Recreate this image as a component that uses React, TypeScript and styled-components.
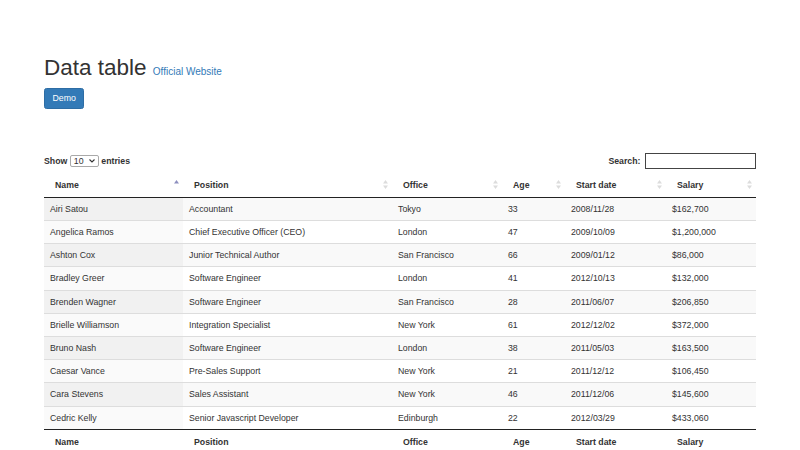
import React from 'react';
import styled, { createGlobalStyle } from 'styled-components';

const GlobalStyle = createGlobalStyle`
  *, *::before, *::after {
    box-sizing: border-box;
  }
  body {
    margin: 0;
    background: #fff;
    color: #333;
    font-family: "Liberation Sans", Arial, sans-serif;
    font-size: 8.75px;
    line-height: 1.42857;
  }
`;

type Employee = {
  name: string;
  position: string;
  office: string;
  age: number;
  start: string;
  salary: string;
};

const employees: Employee[] = [
  { name: 'Airi Satou', position: 'Accountant', office: 'Tokyo', age: 33, start: '2008/11/28', salary: '$162,700' },
  { name: 'Angelica Ramos', position: 'Chief Executive Officer (CEO)', office: 'London', age: 47, start: '2009/10/09', salary: '$1,200,000' },
  { name: 'Ashton Cox', position: 'Junior Technical Author', office: 'San Francisco', age: 66, start: '2009/01/12', salary: '$86,000' },
  { name: 'Bradley Greer', position: 'Software Engineer', office: 'London', age: 41, start: '2012/10/13', salary: '$132,000' },
  { name: 'Brenden Wagner', position: 'Software Engineer', office: 'San Francisco', age: 28, start: '2011/06/07', salary: '$206,850' },
  { name: 'Brielle Williamson', position: 'Integration Specialist', office: 'New York', age: 61, start: '2012/12/02', salary: '$372,000' },
  { name: 'Bruno Nash', position: 'Software Engineer', office: 'London', age: 38, start: '2011/05/03', salary: '$163,500' },
  { name: 'Caesar Vance', position: 'Pre-Sales Support', office: 'New York', age: 21, start: '2011/12/12', salary: '$106,450' },
  { name: 'Cara Stevens', position: 'Sales Assistant', office: 'New York', age: 46, start: '2011/12/06', salary: '$145,600' },
  { name: 'Cedric Kelly', position: 'Senior Javascript Developer', office: 'Edinburgh', age: 22, start: '2012/03/29', salary: '$433,060' }
];

const columns = [
  { label: 'Name', width: 139 },
  { label: 'Position', width: 209 },
  { label: 'Office', width: 110 },
  { label: 'Age', width: 63 },
  { label: 'Start date', width: 101 },
  { label: 'Salary', width: 90 }
];

const Container = styled.div`
  width: 756px;
  padding: 56px 0 0 44px;
`;

const Title = styled.h1`
  margin: 0;
  font-size: 22.5px;
  font-weight: 400;
  line-height: 1.1;
  color: #333;
`;

const TitleLink = styled.a`
  font-size: 10px;
  color: #337ab7;
  text-decoration: none;
`;

const DemoButton = styled.button`
  display: block;
  margin-top: 7px;
  padding: 3.5px 7.5px;
  font-family: inherit;
  font-size: 8.75px;
  line-height: 12px;
  color: #fff;
  background: #337ab7;
  border: 1px solid #2e6da4;
  border-radius: 2.5px;
`;

const Toolbar = styled.div`
  display: flex;
  justify-content: space-between;
  align-items: center;
  margin-top: 44px;
  height: 16px;
`;

const ToolLabel = styled.label`
  display: flex;
  align-items: center;
  gap: 2.5px;
  font-weight: 700;
  color: #333;
`;

const SelectWrap = styled.span`
  position: relative;
  display: inline-flex;
`;

const LengthSelect = styled.select`
  appearance: none;
  width: 29px;
  height: 12px;
  padding: 0 0 0 3px;
  font-family: inherit;
  font-size: 8.75px;
  line-height: 10px;
  color: #333;
  border: 1px solid #a9a9a9;
  border-radius: 2px;
  background: #fff;
`;

const Chevron = styled.svg`
  position: absolute;
  right: 4px;
  top: 4px;
  pointer-events: none;
`;

const SearchInput = styled.input`
  width: 111px;
  height: 16px;
  margin-left: 2px;
  border: 1px solid #444;
  padding: 0 3px;
  font-family: inherit;
  font-size: 8.75px;
`;

const Table = styled.table`
  width: 712px;
  margin-top: 4px;
  table-layout: fixed;
  border-collapse: separate;
  border-spacing: 0;
`;

const HeadCell = styled.th<{ $foot?: boolean }>`
  padding: 6px 4px 6px 11px;
  font-weight: 700;
  text-align: left;
  line-height: 12px;
  color: #333;
  ${(p) => (p.$foot ? 'border-top: 1px solid #222;' : 'border-bottom: 1px solid #222;')}
`;

const HeadInner = styled.div`
  display: flex;
  justify-content: space-between;
  align-items: center;
`;

const Row = styled.tr<{ $odd: boolean }>`
  background: ${(p) => (p.$odd ? '#f9f9f9' : '#fff')};

  & > td {
    border-top: 1px solid #ddd;
  }
  &:first-child > td {
    border-top: none;
  }
  & > td:first-child {
    background: ${(p) => (p.$odd ? '#f1f1f1' : '#fafafa')};
  }
`;

const Cell = styled.td`
  padding: 5px 6px;
  line-height: 12.2px;
  color: #333;
  white-space: nowrap;
`;

const SortIcon = ({ active }: { active?: boolean }) => (
  <svg width="5" height="9" viewBox="0 0 5 9">
    <polygon points="2.5,0 5,3.5 0,3.5" fill={active ? '#8d8fbf' : '#dcdcdc'} />
    {!active && <polygon points="0,5.5 5,5.5 2.5,9" fill="#dcdcdc" />}
  </svg>
);

const App = () => {
  return (
    <>
      <GlobalStyle />
      <Container>
        <Title>
          Data table <TitleLink href="#">Official Website</TitleLink>
        </Title>
        <DemoButton>Demo</DemoButton>

        <Toolbar>
          <ToolLabel>
            Show
            <SelectWrap>
              <LengthSelect defaultValue="10">
                <option value="10">10</option>
                <option value="25">25</option>
                <option value="50">50</option>
                <option value="100">100</option>
              </LengthSelect>
              <Chevron width="6" height="4" viewBox="0 0 6 4">
                <polyline points="0.5,0.5 3,3 5.5,0.5" fill="none" stroke="#333" strokeWidth="1.1" />
              </Chevron>
            </SelectWrap>
            entries
          </ToolLabel>
          <ToolLabel>
            Search:
            <SearchInput type="search" />
          </ToolLabel>
        </Toolbar>

        <Table>
          <thead>
            <tr>
              {columns.map((c, i) => (
                <HeadCell key={c.label} style={{ width: c.width }}>
                  <HeadInner>
                    <span>{c.label}</span>
                    <SortIcon active={i === 0} />
                  </HeadInner>
                </HeadCell>
              ))}
            </tr>
          </thead>
          <tbody>
            {employees.map((e, i) => (
              <Row key={e.name} $odd={i % 2 === 0}>
                <Cell>{e.name}</Cell>
                <Cell>{e.position}</Cell>
                <Cell>{e.office}</Cell>
                <Cell>{e.age}</Cell>
                <Cell>{e.start}</Cell>
                <Cell>{e.salary}</Cell>
              </Row>
            ))}
          </tbody>
          <tfoot>
            <tr>
              {columns.map((c) => (
                <HeadCell key={c.label} $foot>
                  {c.label}
                </HeadCell>
              ))}
            </tr>
          </tfoot>
        </Table>
      </Container>
    </>
  );
};

export default App;
